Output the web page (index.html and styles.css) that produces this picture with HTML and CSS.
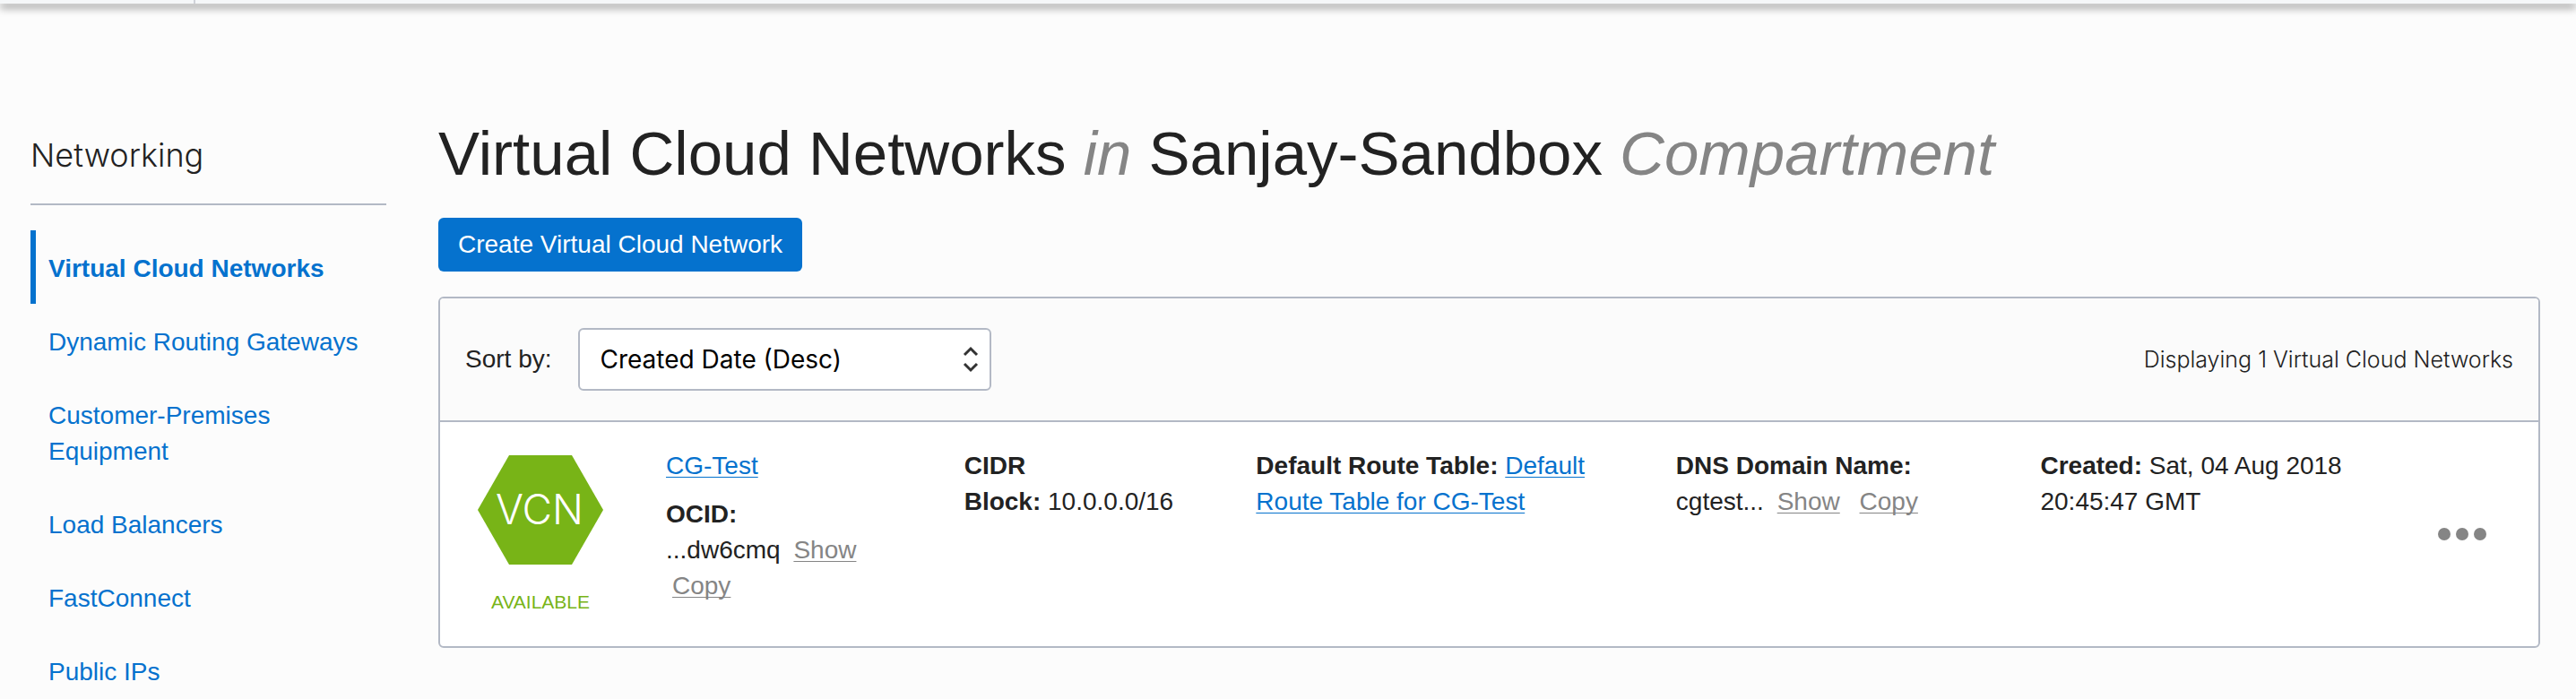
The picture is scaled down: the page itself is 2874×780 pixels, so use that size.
FILE: index.html
```html
<!DOCTYPE html>
<html lang="en">
<head>
  <meta charset="UTF-8" />
  <meta name="viewport" content="width=device-width, initial-scale=1.0"/>
  <title>Virtual Cloud Networks</title>
  <link rel="stylesheet" href="styles.css">
</head>
<body>
  <header class="topbar">
    <div class="topbar-section"></div>
  </header>

  <div class="page">
    <nav class="sidebar">
      <h2>Networking</h2>
      <ul>
        <li><a class="active" href="#">Virtual Cloud Networks</a></li>
        <li><a href="#">Dynamic Routing Gateways</a></li>
        <li><a href="#">Customer-Premises Equipment</a></li>
        <li><a href="#">Load Balancers</a></li>
        <li><a href="#">FastConnect</a></li>
        <li><a href="#">Public IPs</a></li>
      </ul>
    </nav>

    <main class="content">
      <h1>Virtual Cloud Networks <em>in</em> Sanjay-Sandbox <em>Compartment</em></h1>
      <button class="create" type="button">Create Virtual Cloud Network</button>

      <section class="card">
        <div class="card-header">
          <label for="sort">Sort by:</label>
          <div class="select-wrap">
            <select id="sort">
              <option>Created Date (Desc)</option>
            </select>
            <svg class="select-arrows" width="18" height="30" viewBox="0 0 18 30" aria-hidden="true">
              <path d="M2 10 L9 3 L16 10 M2 20 L9 27 L16 20" fill="none" stroke="#333" stroke-width="3"/>
            </svg>
          </div>
          <span class="count">Displaying 1 Virtual Cloud Networks</span>
        </div>

        <div class="vcn-row">
          <div class="status">
            <svg width="140" height="122" viewBox="0 0 140 122" role="img" aria-label="VCN">
              <polygon points="35,0 105,0 140,61 105,122 35,122 0,61" fill="#78b417"/>
              <text class="status-text" x="69" y="77" text-anchor="middle">VCN</text>
            </svg>
            <span class="status-label">AVAILABLE</span>
          </div>
          <div class="cell">
            <a class="name" href="#">CG-Test</a>
            <strong class="line">OCID:</strong>
            ...dw6cmq <a class="action" href="#">Show</a> <a class="action" href="#">Copy</a>
          </div>
          <div class="cell"><strong>CIDR Block:</strong>&nbsp;10.0.0.0/16</div>
          <div class="cell"><strong>Default Route Table:</strong> <a href="#">Default Route Table for CG-Test</a></div>
          <div class="cell">
            <strong class="line">DNS Domain Name:</strong>
            cgtest... <a class="action" href="#">Show</a> <a class="action" href="#">Copy</a>
          </div>
          <div class="cell"><strong>Created:</strong> Sat, 04 Aug 2018 20:45:47 GMT</div>
          <button class="more" type="button" aria-label="Actions">
            <svg width="54" height="14" viewBox="0 0 54 14" fill="#858585">
              <circle cx="7" cy="7" r="7"/>
              <circle cx="27" cy="7" r="7"/>
              <circle cx="47" cy="7" r="7"/>
            </svg>
          </button>
        </div>
      </section>
    </main>
  </div>
</body>
</html>
```

FILE: styles.css
```css
* {
  box-sizing: border-box;
}

body {
  margin: 0;
  background: #fcfcfc;
  color: #222;
  font-family: "Helvetica Neue", "Liberation Sans", Arial, sans-serif;
  font-size: 28px;
  line-height: 40px;
}

a {
  color: #0572ce;
}

.topbar {
  height: 4px;
  background: #f5f7f9;
  box-shadow: 0 4px 10px rgba(0, 0, 0, 0.6);
}

.topbar-section {
  width: 218px;
  height: 4px;
  border-right: 2px solid #d0d3d9;
}

.page {
  display: flex;
  gap: 58px;
  padding: 128px 40px 0 34px;
}

/* sidebar */
.sidebar {
  flex: 0 0 397px;
}

.sidebar h2 {
  margin: 0 0 28px;
  padding: 16px 0 29px;
  border-bottom: 2px solid #b3b9c5;
  font-family: Inter, sans-serif;
  font-size: 36px;
  font-weight: 300;
  line-height: 50px;
}

.sidebar ul {
  list-style: none;
  margin: 0;
  padding: 0;
}

.sidebar a {
  display: block;
  padding: 23px 14px 19px;
  border-left: 6px solid transparent;
  text-decoration: none;
}

.sidebar .active {
  border-left-color: #0572ce;
  font-weight: bold;
}

/* main column */
.content {
  flex: 1;
  min-width: 0;
}

h1 {
  margin: 0 0 32px;
  font-size: 69px;
  font-weight: normal;
  line-height: 79px;
}

h1 em {
  color: #858585;
}

.create {
  display: block;
  height: 60px;
  margin-bottom: 28px;
  padding: 0 22px;
  border: none;
  border-radius: 6px;
  background: #0572ce;
  color: #fff;
  font: inherit;
}

.card {
  border: 2px solid #b3b9c5;
  border-radius: 6px;
  background: #fff;
}

.card-header {
  display: flex;
  align-items: center;
  padding: 33px 28px;
  border-bottom: 2px solid #b3b9c5;
  border-radius: 4px 4px 0 0;
  background: #fbfbfb;
}

.select-wrap {
  position: relative;
  margin-left: 30px;
}

.select-wrap select {
  display: block;
  appearance: none;
  width: 461px;
  height: 70px;
  padding: 0 22px;
  border: 2px solid #b3b9c5;
  border-radius: 6px;
  background: #fff;
  color: #000;
  font-family: Inter, sans-serif;
  font-size: 28px;
}

.select-arrows {
  position: absolute;
  right: 14px;
  top: 20px;
  pointer-events: none;
}

.count {
  margin-left: auto;
  font-family: Inter, sans-serif;
  font-size: 25px;
  font-weight: 300;
}

.vcn-row {
  display: grid;
  grid-template-columns: 150px 273fr 266fr 409fr 347fr 384fr 54px;
  column-gap: 60px;
  padding: 29px 58px 29px 42px;
}

.status {
  display: flex;
  flex-direction: column;
  align-items: center;
  width: 140px;
  padding: 8px 0 0;
}

.status-text {
  fill: #fff;
  font-family: Inter, sans-serif;
  font-size: 46px;
  font-weight: 300;
}

.status-label {
  margin-top: 22px;
  color: #78b417;
  font-size: 21px;
}

.name {
  display: inline-block;
  margin-bottom: 14px;
}

.line {
  display: block;
}

.cell a {
  text-underline-offset: 3px;
  text-decoration-thickness: 1px;
  text-decoration-skip-ink: none;
}

.cell .action {
  margin: 0 7px;
  color: #858585;
}

.more {
  align-self: center;
  display: flex;
  padding: 0;
  border: none;
  background: none;
}
```
